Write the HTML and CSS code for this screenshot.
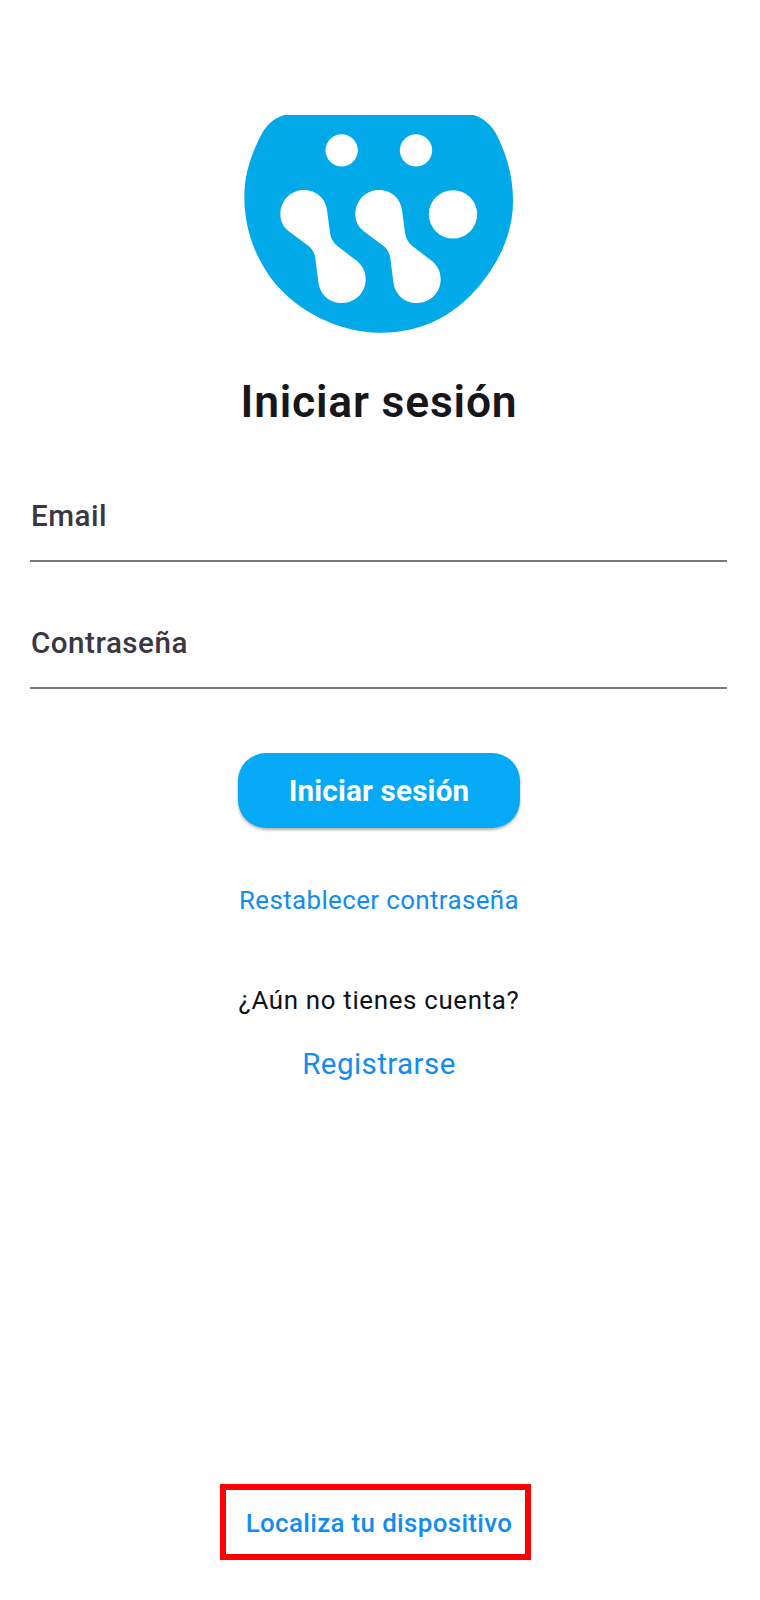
FILE: index.html
```html
<!DOCTYPE html>
<html lang="es">
<head>
<meta charset="utf-8">
<title>Iniciar sesión</title>
<link rel="stylesheet" href="styles.css">
</head>
<body>
<main class="screen">
  <svg class="logo" viewBox="0 0 870 705" aria-hidden="true">
    <path fill="#02a9e9" d="M148 30H717C752 41 778 70 792 104C818 160 834 220 834 288C834 374 802 450 752 518C670 630 562 683 436 683C310 683 187 617 116 530C55 451 28 363 28 277C28 208 48 150 75 97C91 63 114 40 148 30Z"/>
    <g fill="#fff">
      <circle cx="320" cy="136" r="48.500"/>
      <circle cx="543" cy="136" r="48.500"/>
      <circle cx="654" cy="328" r="72.500"/>
      <path id="drop" d="M207 255C244 255 274 281 277 322L285 383C287 400 295 413 308 424L358 462C381 478 392 497 392 523C392 563 361 594 321 594C283 594 254 568 250 530L241 460C239 444 231 431 218 421L164 381C145 367 136 350 136 328C136 287 167 255 207 255Z"/>
      <use href="#drop" x="225"/>
    </g>
  </svg>
  <h1 class="title">Iniciar sesión</h1>
  <div class="field"><span class="label">Email</span></div>
  <div class="field field-password"><span class="label">Contraseña</span></div>
  <button class="submit"><span class="submit-text">Iniciar sesión</span></button>
  <a class="link reset">Restablecer contraseña</a>
  <p class="prompt">¿Aún no tienes cuenta?</p>
  <a class="link register">Registrarse</a>
  <div class="locate"><a class="link locate-text">Localiza tu dispositivo</a></div>
</main>
</body>
</html>
```

FILE: styles.css
```css
* { box-sizing: border-box; }
body { margin: 0; background: #fff; font-family: Roboto, "Liberation Sans", sans-serif; }
.screen { display: flex; flex-direction: column; align-items: center; width: 760px; height: 1600px; padding-top: 105px; white-space: nowrap; }
.logo { width: 290px; height: 235px; flex: none; }
.title { margin: 36px 2px 0 0; height: 52px; line-height: 52px; font-size: 44.4px; font-weight: 600; letter-spacing: 0.8px; color: #16161b; }
.field { width: 697px; height: 66px; margin: 68px 3px 0 0; padding-left: 1px; border-bottom: 2px solid #7d7782; }
.field-password { margin-top: 61px; }
.label { display: block; line-height: 40px; font-size: 29.6px; font-weight: 470; letter-spacing: 0.5px; color: #3b3644; }
.submit { width: 282px; height: 75px; margin: 64px 0 0 -2px; padding: 0; border: 0; border-radius: 28px; background: #05a9f6; color: #fff; font: 700 29.6px/76px Roboto, sans-serif; letter-spacing: 0.2px; box-shadow: 0 2px 3px rgba(0,0,0,.3); }
.link { color: #128cf0; text-decoration: none; }
.reset { margin: 52px 2px 0 0; line-height: 40px; font-size: 25.9px; letter-spacing: 0.38px; }
.prompt { margin: 60px 2px 0 0; line-height: 40px; font-size: 25.9px; letter-spacing: 0.66px; color: #111115; }
.register { margin: 24px 2px 0 0; line-height: 40px; font-size: 29.6px; letter-spacing: 0.4px; }
.locate { width: 311px; height: 76px; margin: 400px 0 0 -9px; padding-left: 7px; border: 6px solid #f00; text-align: center; }
.locate-text { line-height: 66px; font-size: 25.9px; font-weight: 480; letter-spacing: 0.36px; }
```
